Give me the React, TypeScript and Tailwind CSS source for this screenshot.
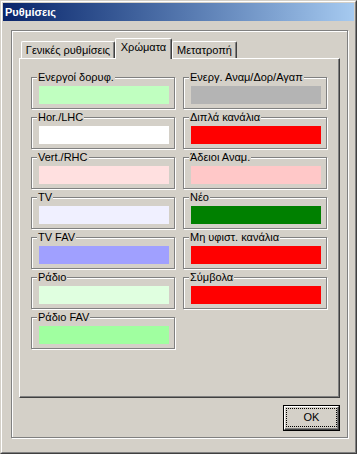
const FONT = { fontFamily: '"Liberation Sans", Arial, sans-serif' }

interface ColorItem {
  label: string;
  color: string;
}

const leftItems: ColorItem[] = [
  { label: 'Ενεργοί δορυφ.', color: 'bg-[#C0FFC0]' },
  { label: 'Hor./LHC', color: 'bg-[#FFFFFF]' },
  { label: 'Vert./RHC', color: 'bg-[#FFE0E0]' },
  { label: 'TV', color: 'bg-[#F0F0FF]' },
  { label: 'TV FAV', color: 'bg-[#A0A0FF]' },
  { label: 'Ράδιο', color: 'bg-[#E0FFE0]' },
  { label: 'Ράδιο FAV', color: 'bg-[#A0FFA0]' },
]

const rightItems: ColorItem[] = [
  { label: 'Ενεργ. Αναμ/Δορ/Αγαπ', color: 'bg-[#B4B4B4]' },
  { label: 'Διπλά κανάλια', color: 'bg-[#FF0000]' },
  { label: 'Άδειοι Αναμ.', color: 'bg-[#FFC8C8]' },
  { label: 'Νέο', color: 'bg-[#008000]' },
  { label: 'Μη υφιστ. κανάλια', color: 'bg-[#FF0000]' },
  { label: 'Σύμβολα', color: 'bg-[#FF0000]' },
]

function ColorBox({ item }: { item: ColorItem }) {
  return (
    <div className="w-[144px] h-[32px] border border-[#808080] shadow-[inset_1px_1px_0_#ffffff,1px_1px_0_#ffffff]">
      <span className="block w-fit -mt-[7px] ml-[5px] px-[1px] bg-[#D4D0C8] text-[11px] leading-[13px] text-black whitespace-nowrap">
        {item.label}
      </span>
      <div className={`mt-[2px] ml-[7px] w-[130px] h-[18px] ${item.color}`} />
    </div>
  )
}

function Tab({ label, active, width }: { label: string; active?: boolean; width: string }) {
  if (active) {
    return (
      <div className={`relative ${width} h-[21px] -mb-px bg-[#D4D0C8] border-l border-t border-r border-l-white border-t-white border-r-[#404040] rounded-t-[2px] shadow-[inset_-1px_0_0_#808080] flex justify-center pt-[2px] text-[11px] leading-[13px] text-black`}>
        {label}
      </div>
    )
  }
  return (
    <div className={`${width} h-[17px] bg-[#D4D0C8] border-l border-t border-r border-l-white border-t-white border-r-[#404040] rounded-t-[2px] shadow-[inset_-1px_0_0_#808080] flex justify-center pt-[2px] text-[11px] leading-[13px] text-black`}>
      {label}
    </div>
  )
}

export default function App() {
  return (
    <div style={FONT} className="w-[357px] h-[454px] bg-[#D4D0C8] border border-t-[#D4D0C8] border-l-[#D4D0C8] border-r-[#404040] border-b-[#404040]">
      <div className="h-full border border-t-white border-l-white border-r-[#808080] border-b-[#808080] p-[1px] flex flex-col">
        <div className="h-[18px] bg-linear-to-r from-[#0A246A] to-[#A6CAF0] pl-[2px] text-white font-bold text-[11px] leading-[18px]">
          Ρυθμίσεις
        </div>

        <div className="ml-[8px] mt-[9px] w-[337px] h-[408px] border border-[#808080] shadow-[inset_1px_1px_0_#ffffff,1px_1px_0_#ffffff] pt-[7px] pl-[7px]">
          <div className="h-[20px] flex items-end pl-[2px]">
            <Tab label="Γενικές ρυθμίσεις" width="w-[94px]" />
            <Tab label="Χρώματα" width="w-[57px]" active />
            <Tab label="Μετατροπή" width="w-[65px]" />
          </div>

          <div className="w-[321px] h-[340px] border border-l-white border-t-white border-r-[#404040] border-b-[#404040] shadow-[inset_-1px_-1px_0_#808080] pt-[18px] pl-[11px] flex gap-[8px]">
            <div className="flex flex-col gap-[8px]">
              {leftItems.map((item) => (
                <ColorBox key={item.label} item={item} />
              ))}
            </div>
            <div className="flex flex-col gap-[8px]">
              {rightItems.map((item) => (
                <ColorBox key={item.label} item={item} />
              ))}
            </div>
          </div>

          <div className="w-[321px] mt-[7px] flex justify-end">
            <button className="w-[57px] h-[26px] border border-black bg-[#D4D0C8] p-0 flex">
              <div className="flex-1 flex border border-t-white border-l-white border-r-[#404040] border-b-[#404040] shadow-[inset_-1px_-1px_0_#808080]">
                <div className="flex-1 m-[1px] mb-[2px] border border-dotted border-black flex items-center justify-center text-[11px] leading-[13px] text-black">
                  OK
                </div>
              </div>
            </button>
          </div>
        </div>
      </div>
    </div>
  )
}
